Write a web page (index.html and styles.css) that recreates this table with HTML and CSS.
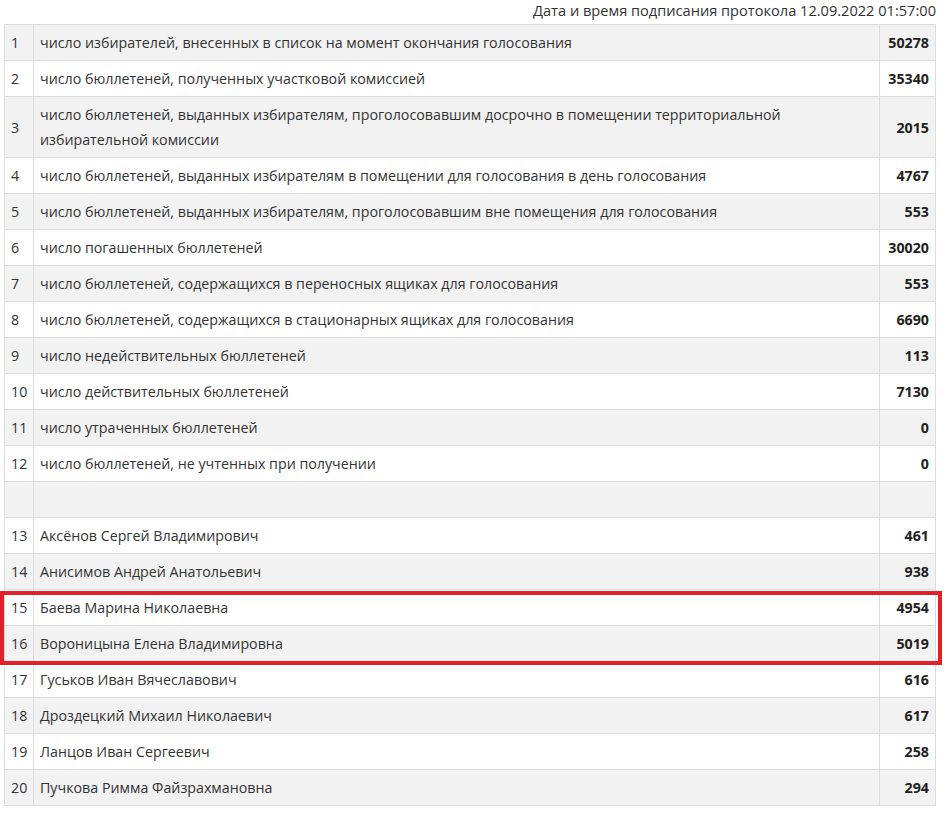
FILE: index.html
```html
<!DOCTYPE html>
<html lang="ru">
<head>
<meta charset="utf-8">
<link rel="stylesheet" href="styles.css">
</head>
<body>
<div class="page">
  <div class="signed">Дата и время подписания протокола 12.09.2022 01:57:00</div>
  <div class="table-wrap">
    <table class="results">
      <tbody>
        <tr><td class="n">1</td><td class="t">число избирателей, внесенных в список на момент окончания голосования</td><td class="v">50278</td></tr>
        <tr><td class="n">2</td><td class="t">число бюллетеней, полученных участковой комиссией</td><td class="v">35340</td></tr>
        <tr><td class="n">3</td><td class="t">число бюллетеней, выданных избирателям, проголосовавшим досрочно в помещении территориальной избирательной комиссии</td><td class="v">2015</td></tr>
        <tr><td class="n">4</td><td class="t">число бюллетеней, выданных избирателям в помещении для голосования в день голосования</td><td class="v">4767</td></tr>
        <tr><td class="n">5</td><td class="t">число бюллетеней, выданных избирателям, проголосовавшим вне помещения для голосования</td><td class="v">553</td></tr>
        <tr><td class="n">6</td><td class="t">число погашенных бюллетеней</td><td class="v">30020</td></tr>
        <tr><td class="n">7</td><td class="t">число бюллетеней, содержащихся в переносных ящиках для голосования</td><td class="v">553</td></tr>
        <tr><td class="n">8</td><td class="t">число бюллетеней, содержащихся в стационарных ящиках для голосования</td><td class="v">6690</td></tr>
        <tr><td class="n">9</td><td class="t">число недействительных бюллетеней</td><td class="v">113</td></tr>
        <tr><td class="n">10</td><td class="t">число действительных бюллетеней</td><td class="v">7130</td></tr>
        <tr><td class="n">11</td><td class="t">число утраченных бюллетеней</td><td class="v">0</td></tr>
        <tr><td class="n">12</td><td class="t">число бюллетеней, не учтенных при получении</td><td class="v">0</td></tr>
        <tr><td class="n"></td><td class="t"></td><td class="v"></td></tr>
        <tr><td class="n">13</td><td class="t">Аксёнов Сергей Владимирович</td><td class="v">461</td></tr>
        <tr><td class="n">14</td><td class="t">Анисимов Андрей Анатольевич</td><td class="v">938</td></tr>
        <tr><td class="n">15</td><td class="t">Баева Марина Николаевна</td><td class="v">4954</td></tr>
        <tr><td class="n">16</td><td class="t">Вороницына Елена Владимировна</td><td class="v">5019</td></tr>
        <tr><td class="n">17</td><td class="t">Гуськов Иван Вячеславович</td><td class="v">616</td></tr>
        <tr><td class="n">18</td><td class="t">Дроздецкий Михаил Николаевич</td><td class="v">617</td></tr>
        <tr><td class="n">19</td><td class="t">Ланцов Иван Сергеевич</td><td class="v">258</td></tr>
        <tr><td class="n">20</td><td class="t">Пучкова Римма Файзрахмановна</td><td class="v">294</td></tr>
      </tbody>
    </table>
    <div class="highlight"></div>
  </div>
</div>
</body>
</html>
```

FILE: styles.css
```css
html, body {
  margin: 0;
  padding: 0;
  background: #ffffff;
}
.page {
  width: 932px;
  margin-left: 4px;
  font-family: "Open Sans", "Noto Sans", sans-serif;
  font-size: 14.25px;
  color: #333333;
}
.signed {
  text-align: right;
  font-size: 14.6px;
  line-height: 20px;
  height: 20px;
  margin-bottom: 4px;
}
.table-wrap {
  position: relative;
}
.results {
  width: 100%;
  border-collapse: collapse;
  table-layout: fixed;
}
.results td {
  border: 1px solid #dddddd;
  padding: 5px 6px;
  line-height: 25px;
  height: 25px;
  vertical-align: middle;
}
.results tr:nth-child(odd) td {
  background: #f2f2f2;
}
.results tr:nth-child(even) td {
  background: #ffffff;
}
.results td.n {
  width: 17px;
  padding-right: 5px;
}
.results td.t {
  padding-left: 6px;
}
.results td.v {
  width: 43px;
  text-align: right;
  font-weight: bold;
  color: #222222;
}
.highlight {
  position: absolute;
  left: -4px;
  top: 567px;
  width: 934px;
  height: 66px;
  border: 4px solid #e32027;
  pointer-events: none;
}
```
